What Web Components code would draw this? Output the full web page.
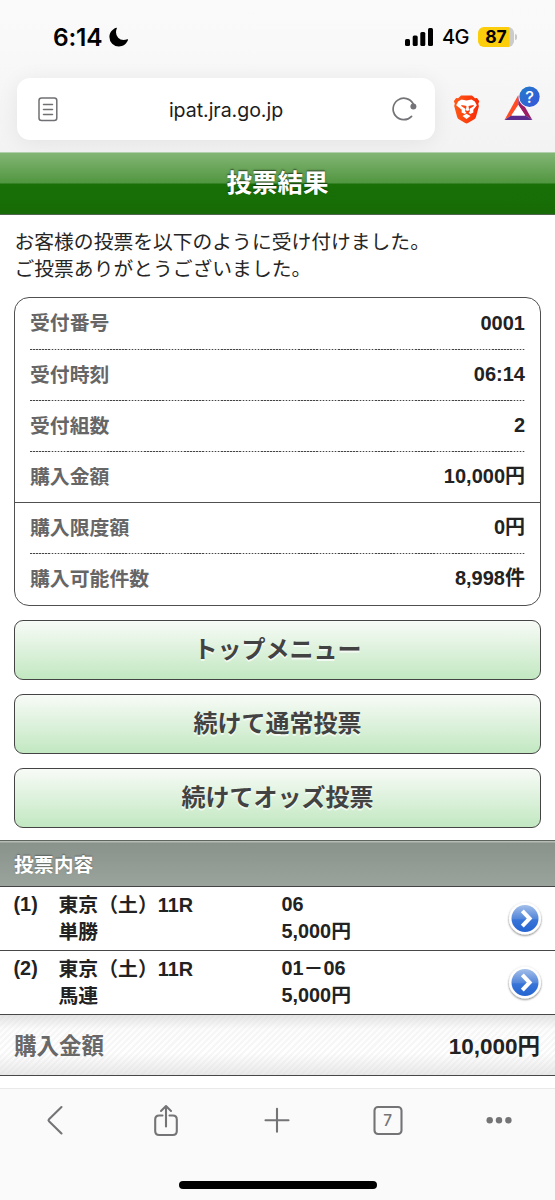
<!DOCTYPE html>
<html lang="ja">
<head>
<meta charset="utf-8">
<meta name="viewport" content="width=device-width">
<title>投票結果</title>
<style>
html,body{margin:0;padding:0;background:#fff}
body{width:555px;height:1200px;overflow:hidden;font-family:"Liberation Sans","Noto Sans CJK JP",sans-serif;color:#222}
</style>
</head>
<body>
<phone-screen>
  <status-bar slot="top" time="6:14" network="4G" battery="87"></status-bar>
  <address-bar slot="top">ipat.jra.go.jp</address-bar>
  <page-title>投票結果</page-title>
  <page-lead>お客様の投票を以下のように受け付けました。<br>ご投票ありがとうございました。</page-lead>
  <info-card>
    <info-row label="受付番号" first>0001</info-row>
    <info-row label="受付時刻">06:14</info-row>
    <info-row label="受付組数">2</info-row>
    <info-row label="購入金額" solid>10,000円</info-row>
    <info-row label="購入限度額">0円</info-row>
    <info-row label="購入可能件数" last>8,998件</info-row>
  </info-card>
  <menu-button>トップメニュー</menu-button>
  <menu-button>続けて通常投票</menu-button>
  <menu-button>続けてオッズ投票</menu-button>
  <section-head>投票内容</section-head>
  <bet-row no="(1)" race="東京（土）11R" kind="単勝" pick="06" amount="5,000円"></bet-row>
  <bet-row no="(2)" race="東京（土）11R" kind="馬連" pick="01－06" amount="5,000円"></bet-row>
  <total-row label="購入金額">10,000円</total-row>
  <tool-bar slot="bottom" tabs="7"></tool-bar>
</phone-screen>
<script>
const define = (name, html) => customElements.define(name, class extends HTMLElement {
  constructor() {
    super();
    const t = document.createElement('template');
    t.innerHTML = html.replace(/\{(\w+)\}/g, (_, k) => this.getAttribute(k) || '');
    this.attachShadow({mode: 'open'}).append(t.content.cloneNode(true));
  }
});

define('phone-screen', `<style>
:host{display:flex;flex-direction:column;width:555px;height:1200px;background:#fff}
header{height:152px;flex:none;background:linear-gradient(180deg,#fafafa 0,#f9f9f9 45px,#f6f6f6 90px,#f3f3f4 152px)}
main{flex:1;min-height:0;overflow:hidden}
</style><header><slot name="top"></slot></header><main><slot></slot></main><slot name="bottom"></slot>`);

define('status-bar', `<style>
:host{display:flex;align-items:center;height:78px;box-sizing:border-box;padding:0 38px 4px 53px;font-family:Inter,sans-serif;color:#000}
.time{font-size:24.5px;font-weight:600;letter-spacing:-.2px;width:49px;white-space:nowrap}
.moon{margin-left:7px}
.bars{margin-left:auto}
.net{font-size:20px;font-weight:500;margin-left:8px;letter-spacing:-.6px;width:28px;white-space:nowrap}
.bat{margin-left:8px;width:36px;height:20px;border-radius:6px;background:linear-gradient(90deg,#fccd0b 0 87%,#cbcbc9 87%);font-size:17.500px;line-height:20px;font-weight:700;text-align:center}
.tip{width:2px;height:6px;border-radius:0 2px 2px 0;background:#c8c8c8;margin-left:1px}
svg{display:block}
</style><span class="time">{time}</span>
<svg class="moon" width="20" height="20" viewBox="0 0 20 20"><path d="M7.300.8C3.200 2.200.4 5.700.4 10a9.400 9.400 0 0 0 9.400 9.400c4.300 0 7.900-2.800 9.200-6.500.2-.6-.2-.8-.7-.6-1.200.5-2.500.7-3.800.7A7.600 7.600 0 0 1 7 5.300c0-1.300.300-2.600.8-3.700.3-.6 0-1-.5-.8z"/></svg>
<svg class="bars" width="29" height="18" viewBox="0 0 29 18"><rect y="11" width="5" height="7" rx="1.500"/><rect x="7.700" y="7.500" width="5" height="10.500" rx="1.500"/><rect x="15.300" y="4" width="5" height="14" rx="1.500"/><rect x="23" width="5" height="18" rx="1.500"/></svg>
<span class="net">{network}</span><span class="bat">{battery}</span><span class="tip"></span>`);

define('address-bar', `<style>
:host{display:flex;align-items:center;height:62px;padding-left:17px;font-family:Inter,sans-serif;color:#1d1d21}
.field{width:418px;height:62px;box-sizing:border-box;border-radius:13px;background:#fff;box-shadow:0 3px 22px rgba(0,0,0,.07);display:flex;align-items:center;justify-content:space-between;padding:0 18px 0 21px}
.url{font-size:19.600px;letter-spacing:-.05px;padding:1px 0 0 3px}
svg{display:block;flex:none}
.lion{margin-left:18px}.bat{margin:0 0 10px 22.500px}
</style>
<div class="field">
<svg width="20" height="25" viewBox="0 0 20 25" fill="none" stroke="#707074" stroke-width="1.500"><rect x="1" y="1" width="17.800" height="22.500" rx="2.500"/><path d="M5.500 7.500h9M5.500 12.500h9M5.500 17.500h9" stroke-linecap="round"/></svg>
<span class="url"><slot></slot></span>
<svg width="26" height="26" viewBox="0 0 26 26"><path d="M20.600 20.300A10.700 10.700 0 1 1 22.300 8" fill="none" stroke="#747478" stroke-width="1.700" stroke-linecap="round"/><circle cx="22.400" cy="10.500" r="3" fill="#747478"/></svg>
</div>
<svg class="lion" width="27" height="32" viewBox="0 0 27 32"><defs><linearGradient id="l"><stop stop-color="#ff5a16"/><stop offset="1" stop-color="#f72a08"/></linearGradient></defs>
<path fill="url(#l)" d="M8 2.500h11l3 2.700 2-.3 2.300 3.300-1 2.600.6 2.400-2.800 10.200c-.4 1.500-1 2.300-2.200 3.200l-6 3.500c-.9.600-1.800.6-2.700 0l-6-3.500c-1.200-.9-1.800-1.700-2.200-3.200L1.200 13l.6-2.400-1-2.400L3.100 4.900l2 .3z"/>
<path fill="#fff" d="M8.500 6.500l5 1 5-1 3.300 2 2 3.700-3.500 4.600.1 2.600-3.200 1.500-1.600-1.200 1.500-1.700-.7-1 .2-1.200 3.600-2.300.8-1.600-3.300.5-2.200.7.6 4.200-1.600.7-1.600-.7.600-4.200-2.200-.7-3.300-.5.800 1.600 3.600 2.300.2 1.200-.7 1 1.500 1.700-1.600 1.200-3.200-1.500.1-2.600L3.200 12.200l2-3.700z"/><path fill="#fff" d="M13.500 20.800l4 2.200-4 3-4-3z"/></svg>
<svg class="bat" width="38" height="36" viewBox="0 0 38 36"><defs><linearGradient id="q" y2="1"><stop stop-color="#227bc9"/><stop offset="1" stop-color="#3856dc"/></linearGradient></defs>
<path fill="#ff4c24" d="M15.300 9v10L8.200 29.400 1.500 34z"/><path fill="#9d1d64" d="M15.300 9v10l7 10.400 7 4.600z"/><path fill="#5b2c8e" d="M1.500 34l6.700-4.600h14.300l7 4.600z"/><path fill="#fff" d="M15.300 19l6.800 10.400H8.700z"/>
<circle cx="26.500" cy="10.800" r="11" fill="#fafafa"/><circle cx="26.500" cy="10.800" r="10.200" fill="url(#q)"/><text x="26.500" y="16.700" text-anchor="middle" font-family="Inter" font-size="16.500" font-weight="500" fill="#fff">?</text></svg>`);

define('page-title', `<style>
:host{display:block;box-sizing:border-box;height:63px;border-top:1px solid #b2d0ad;border-bottom:1px solid #50664c;background:linear-gradient(180deg,#83b575 0,#519640 30px,#187007 31px,#176b06 100%);color:#fff;font-size:25.500px;font-weight:700;line-height:61px;text-align:center;text-shadow:0 -1.500px 1.500px rgba(0,0,0,.6)}
</style><slot></slot>`);

define('page-lead', `<style>
:host{display:block;height:82px;box-sizing:border-box;padding:14px 14.500px 0;font-size:19.800px;line-height:27px;color:#262626;white-space:nowrap}
</style><slot></slot>`);

define('info-card', `<style>
:host{display:block;box-sizing:border-box;margin:0 14px 0;width:527px;height:309px;border:1.500px solid #505050;border-radius:15px}
</style><slot></slot>`);

define('info-row', `<style>
:host{display:block;font-weight:700;font-size:20px;color:#222}
.r{display:flex;justify-content:space-between;align-items:center;box-sizing:border-box;height:50px;margin:0 15px;padding-bottom:2px}
:host([first]) .r{height:51px}
.l{color:#666;font-size:19.850px;padding-top:1px}.l,.v{line-height:30px}
.d{height:1px;margin:0 15px;background:repeating-linear-gradient(90deg,#444 0 1.540px,#ccc 1.540px 3.080px)}
:host([solid]) .d{margin:0;background:#505050}
:host([last]) .d{display:none}
</style><div class="r"><span class="l">{label}</span><span class="v"><slot></slot></span></div><div class="d"></div>`);

define('menu-button', `<style>
:host{display:block;box-sizing:border-box;margin:14px 14px 0;width:527px;height:60px;border:1.500px solid #444;border-radius:9px;background:linear-gradient(180deg,#f8fbf7,#c2e8c1);color:#424242;font-size:24px;font-weight:700;line-height:57px;text-align:center;text-shadow:0 1.500px 0 rgba(255,255,255,.7)}
</style><slot></slot>`);

define('section-head', `<style>
:host{display:block;box-sizing:border-box;height:47px;margin-top:12px;border-top:1.500px solid #5e665f;border-bottom:1px solid #444;box-shadow:inset 0 1.500px 0 #b5bbb5;background:linear-gradient(180deg,#88928b,#9aa49d);color:#fff;font-weight:700;font-size:19.850px;line-height:48px;padding-left:14px;text-shadow:0 -1.500px 1.500px rgba(0,0,0,.35)}
</style><slot></slot>`);

define('bet-row', `<style>
:host{display:grid;grid-template-columns:45px 223px 1fr 36px;box-sizing:border-box;height:64px;border-bottom:1px solid #484848;padding:4px 12px 0 13.500px;font-weight:700;font-size:19.850px;line-height:27px;color:#222;white-space:nowrap}
.race{padding-top:1px}
svg{align-self:center;margin-top:-3px}
</style><div>{no}</div><div class="race">{race}<br>{kind}</div><div>{pick}<br>{amount}</div>
<svg width="36" height="38" viewBox="0 0 36 38"><defs><linearGradient id="b" x2="0" y2="1"><stop stop-color="#a3bfea"/><stop offset=".5" stop-color="#5587da"/><stop offset=".55" stop-color="#3975d8"/><stop offset="1" stop-color="#2464d2"/></linearGradient><filter id="s" x="-30%" y="-30%" width="160%" height="160%"><feDropShadow dx="0" dy="1" stdDeviation="1.300" flood-color="#000" flood-opacity=".55"/></filter></defs><circle cx="18" cy="18.500" r="16" fill="#fff" filter="url(#s)"/><circle cx="18" cy="18.500" r="13.500" fill="url(#b)"/><path d="M15.300 10.800l7.300 7.700-7.300 7.700" fill="none" stroke="#fff" stroke-width="4"/></svg>`);

define('total-row', `<style>
:host{display:flex;justify-content:space-between;align-items:center;box-sizing:border-box;height:61px;border-bottom:1.500px solid #484848;padding:0 15px 2px 14px;font-weight:700;font-size:22.500px;color:#222;background:linear-gradient(180deg,rgba(218,218,218,.75) 0,rgba(240,240,240,.2) 14px,transparent 38px,rgba(220,220,220,.65) 100%),repeating-linear-gradient(135deg,#fff 0 2.200px,#f7f7f7 2.200px 4.350px)}
.l{color:#686868}
</style><span class="l">{label}</span><span><slot></slot></span>`);

define('tool-bar', `<style>
:host{display:flex;flex-direction:column;align-items:center;flex:none;box-sizing:border-box;height:112px;border-top:1px solid #e9e9e9;background:#fafafa}
.i{display:flex;width:555px;height:62px}
.i>*{flex:1;display:flex;align-items:center;justify-content:center;padding-right:1px}
svg{fill:none;stroke:#747477;stroke-width:2.100;stroke-linecap:round;stroke-linejoin:round}
.home{width:198px;height:8px;border-radius:4px;background:#000;margin-top:30px}
</style><div class="i">
<div><svg width="36" height="36" viewBox="0 0 36 36"><path d="M24.500 5L12 17.300q-1 1 0 2L24.500 31.500"/></svg></div>
<div><svg width="36" height="36" viewBox="0 0 36 36"><path d="M14.500 13.500h-3.300q-4 0-4 4v11.500q0 4 4 4h13.600q4 0 4-4V17.500q0-4-4-4h-3.300M18 24.500V4M13 9l5-5 5 5"/></svg></div>
<div><svg width="36" height="36" viewBox="0 0 36 36"><path d="M6.500 18.200h23M18 6.700v23"/></svg></div>
<div><svg width="36" height="36" viewBox="0 0 36 36"><rect x="4.500" y="5" width="27" height="27" rx="3.500"/><text x="17.800" y="23.600" text-anchor="middle" font-family="Inter" font-size="15.500" font-weight="500" fill="#747477" stroke="none">{tabs}</text></svg></div>
<div><svg width="36" height="36" viewBox="0 0 36 36"><g fill="#747477" stroke="none"><circle cx="8.700" cy="18.300" r="3.200"/><circle cx="18" cy="18.300" r="3.200"/><circle cx="27.400" cy="18.300" r="3.200"/></g></svg></div>
</div><div class="home"></div>`);
</script>
</body>
</html>
